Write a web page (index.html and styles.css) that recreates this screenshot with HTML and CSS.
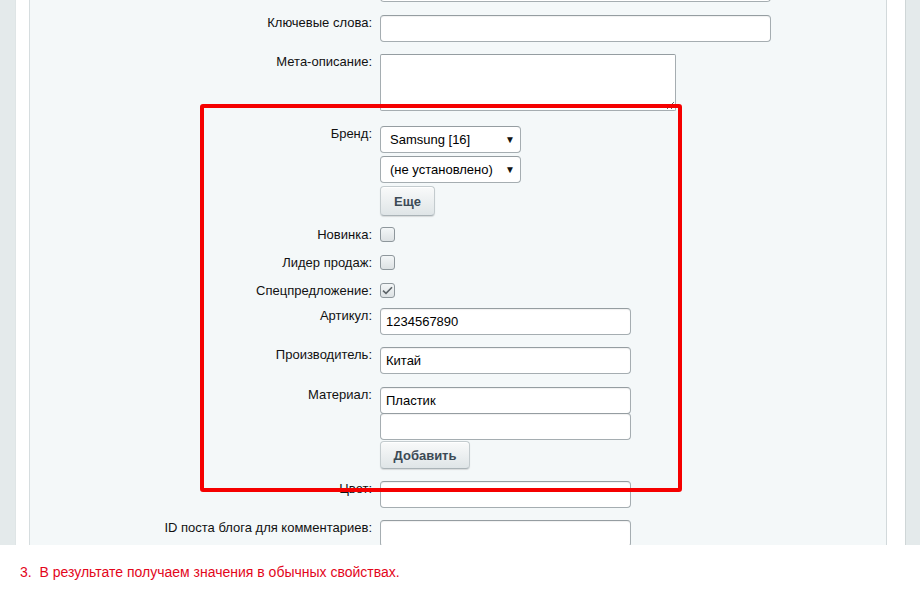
FILE: index.html
```html
<!DOCTYPE html>
<html lang="ru">
<head>
<meta charset="utf-8">
<title>Свойства товара</title>
<link rel="stylesheet" href="styles.css">
</head>
<body>
<div class="screen">
  <div class="page">
    <div class="side side-left"></div>
    <div class="gutter"></div>
    <div class="panel">
      <div class="form">
        <div class="row">
          <div class="label"></div>
          <div class="ctrl"><input class="field field-wide" type="text"></div>
        </div>
        <div class="row gap13">
          <div class="label">Ключевые слова:</div>
          <div class="ctrl"><input class="field field-wide" type="text"></div>
        </div>
        <div class="row">
          <div class="label">Мета-описание:</div>
          <div class="ctrl"><textarea class="area"></textarea></div>
        </div>
        <div class="row gap15">
          <div class="label">Бренд:</div>
          <div class="ctrl stack">
            <div class="select"><span>Samsung [16]</span><span class="arrow">▼</span></div>
            <div class="select"><span>(не установлено)</span><span class="arrow">▼</span></div>
            <button class="btn btn-more" type="button">Еще</button>
          </div>
        </div>
        <div class="row row-check gap11">
          <div class="label">Новинка:</div>
          <div class="ctrl"><span class="check"></span></div>
        </div>
        <div class="row row-check gap13">
          <div class="label">Лидер продаж:</div>
          <div class="ctrl"><span class="check"></span></div>
        </div>
        <div class="row row-check gap13">
          <div class="label">Спецпредложение:</div>
          <div class="ctrl"><span class="check checked"><svg width="11" height="9" viewBox="0 0 11 9"><path d="M1 4.6 L4 7.4 L10 1.2" fill="none" stroke="#5d6468" stroke-width="1.6"/></svg></span></div>
        </div>
        <div class="row gap10">
          <div class="label">Артикул:</div>
          <div class="ctrl"><input class="field" type="text" value="1234567890"></div>
        </div>
        <div class="row">
          <div class="label">Производитель:</div>
          <div class="ctrl"><input class="field" type="text" value="Китай"></div>
        </div>
        <div class="row gap13">
          <div class="label">Материал:</div>
          <div class="ctrl stack stack-tight">
            <input class="field" type="text" value="Пластик">
            <input class="field field-next" type="text">
            <button class="btn btn-add" type="button">Добавить</button>
          </div>
        </div>
        <div class="row">
          <div class="label">Цвет:</div>
          <div class="ctrl"><input class="field" type="text"></div>
        </div>
        <div class="row">
          <div class="label">ID поста блога для комментариев:</div>
          <div class="ctrl"><input class="field" type="text"></div>
        </div>
      </div>
    </div>
    <div class="gutter gutter-right"></div>
    <div class="side side-right"></div>
  </div>
  <p class="note">3.&nbsp; В результате получаем значения в обычных свойствах.</p>
  <div class="annot"></div>
</div>
</body>
</html>
```

FILE: styles.css
```css
* { box-sizing: border-box; }

html, body {
  margin: 0;
  padding: 0;
  background: #ffffff;
}

body {
  font-family: "Liberation Sans", Arial, sans-serif;
  font-size: 13px;
  color: #000;
}

.screen {
  position: relative;
  width: 920px;
  height: 600px;
  overflow: hidden;
}

.page {
  display: flex;
  height: 545px;
}

.side {
  background: #e4eaeb;
}

.side-left {
  width: 16px;
  border-right: 1px solid #dfe5e6;
}

.side-right {
  width: 15px;
  border-left: 1px solid #cfd6d7;
}

.gutter {
  width: 13px;
  background: #ffffff;
}

.gutter-right {
  width: 18px;
}

.panel {
  width: 858px;
  background: #f4f8f9;
  border-left: 1px solid #d6dddf;
  border-right: 1px solid #d2d9db;
  overflow: hidden;
}

.form {
  margin-top: -25px;
  display: flex;
  flex-direction: column;
}

.row {
  display: flex;
  align-items: flex-start;
  margin-top: 12px;
}

.row:first-child { margin-top: 0; }
.row.gap10 { margin-top: 10px; }
.row.gap11 { margin-top: 11px; }
.row.gap13 { margin-top: 13px; }
.row.gap15 { margin-top: 15px; }

.label {
  width: 350px;
  flex: none;
  padding-right: 8px;
  text-align: right;
  line-height: 16px;
  padding-top: 0;
  color: #111;
}

.row-check {
  align-items: center;
  height: 15px;
}

.row-check .label {
  line-height: 15px;
}

.ctrl {
  display: flex;
}

.stack {
  flex-direction: column;
  align-items: flex-start;
  gap: 3px;
}

.stack-tight {
  gap: 0;
}

.field {
  display: block;
  width: 251px;
  height: 27px;
  margin: 0;
  padding: 0 5px;
  border: 1px solid #a5adb1;
  border-top-color: #959da1;
  border-radius: 4px;
  background: #fff;
  box-shadow: inset 0 1px 1px rgba(0, 0, 0, 0.06);
  font-family: "Liberation Sans", Arial, sans-serif;
  font-size: 13px;
  color: #000;
  outline: none;
}

.field-wide {
  width: 391px;
}

.field-next {
  margin-top: -1px;
}

.area {
  display: block;
  width: 296px;
  height: 57px;
  margin: 0;
  border: 1px solid #a5adb1;
  border-top-color: #959da1;
  border-radius: 2px;
  background: #fff;
  font-family: "Liberation Sans", Arial, sans-serif;
  font-size: 13px;
  outline: none;
}

.select {
  display: flex;
  align-items: center;
  justify-content: space-between;
  width: 141px;
  height: 27px;
  padding: 0 5px 0 9px;
  border: 1px solid #a5adb1;
  border-top-color: #959da1;
  border-radius: 4px;
  background: #fff;
  color: #000;
}

.arrow {
  font-size: 10px;
  color: #111;
}

.btn {
  display: block;
  height: 30px;
  margin: 0;
  padding: 0;
  border: 1px solid #c3cbce;
  border-bottom-color: #aab3b7;
  border-radius: 4px;
  background: linear-gradient(#f9fafa, #dfe5e7);
  box-shadow: 0 1px 1px rgba(0, 0, 0, 0.12), inset 0 1px 0 #fff;
  font-family: "Liberation Sans", Arial, sans-serif;
  font-size: 13px;
  font-weight: bold;
  color: #3c4a55;
}

.btn-more {
  width: 55px;
}

.btn-add {
  width: 90px;
  height: 28px;
  margin-top: 1px;
}

.check {
  display: flex;
  align-items: center;
  justify-content: center;
  width: 15px;
  height: 15px;
  border: 1px solid #8e979c;
  border-radius: 3px;
  background: linear-gradient(#f3f6f7, #dde2e4);
}

.note {
  margin: 19px 0 0;
  padding-left: 20px;
  font-family: "Liberation Sans", Arial, sans-serif;
  font-size: 14px;
  line-height: 16px;
  color: #e3061b;
}

.annot {
  position: absolute;
  left: 200px;
  top: 104px;
  width: 482px;
  height: 388px;
  border: 4px solid #f50000;
  border-radius: 3px;
}
```
